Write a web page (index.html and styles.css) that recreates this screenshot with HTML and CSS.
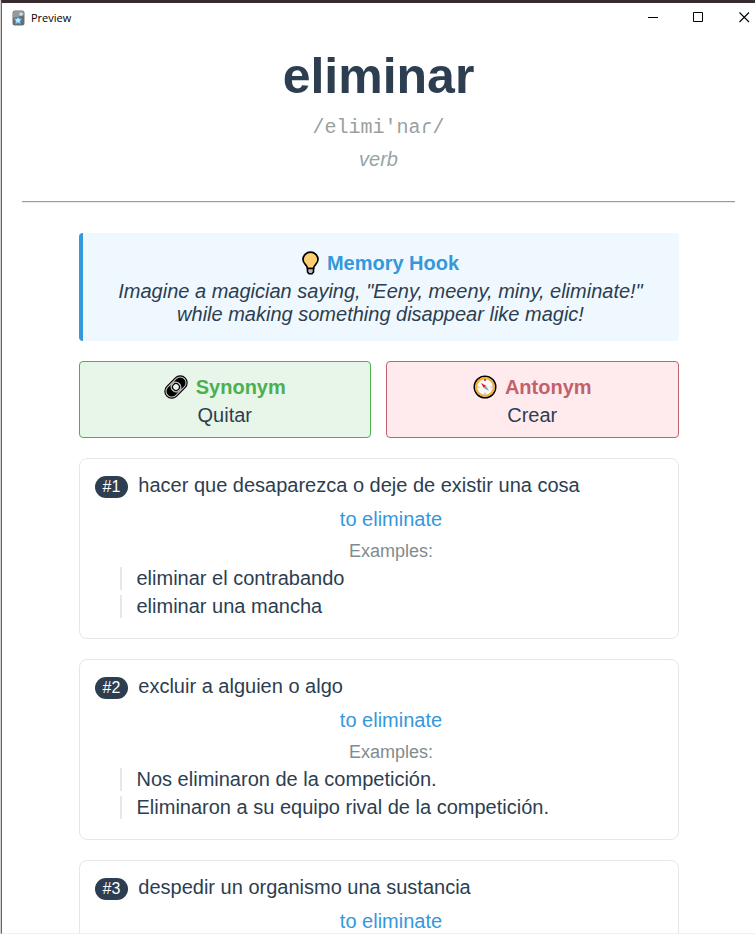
FILE: index.html
```html
<!DOCTYPE html>
<html lang="es">
<head>
<meta charset="utf-8">
<title>Preview</title>
<link rel="stylesheet" href="styles.css">
</head>
<body>
<div class="window">
  <header class="titlebar">
    <svg class="app-icon" width="13" height="16" viewBox="0 0 13 16" aria-hidden="true">
      <rect x="0.5" y="0.5" width="12" height="15" rx="2.5" fill="#6c6c6c"/>
      <path d="M1 8 12 5V3a2 2 0 0 0-2-2H3a2 2 0 0 0-2 2z" fill="#999"/>
      <path d="m6 6.500 1.200 2.300 2.800.300-2 2 .600 2.900L6 12.700 3.400 14 4 11.100 2 9.100l2.800-.300z" fill="#c8eaff" stroke="#45a0e0" stroke-width="1"/>
      <path d="m9 2 .700 1.300 1.500.200-1.100 1 .300 1.500L9 5.300 7.600 6l.300-1.500-1.100-1 1.500-.200z" fill="#d8effc" stroke="#8cc4e8" stroke-width=".5"/>
    </svg>
    <span class="window-title">Preview</span>
    <div class="controls">
      <button class="control" type="button" aria-label="Minimize"><svg width="11" height="11"><path d="M0 5.500h10" stroke="#000"/></svg></button>
      <button class="control" type="button" aria-label="Maximize"><svg width="11" height="11"><path d="M.500.500h9v9h-9z" fill="none" stroke="#000"/></svg></button>
      <button class="control" type="button" aria-label="Close"><svg width="11" height="11"><path d="m.500.500 9.500 9.500M10 .500.500 10" stroke="#000" stroke-width="1.100"/></svg></button>
    </div>
  </header>

  <main class="card">
    <h1 class="word">eliminar</h1>
    <p class="ipa">/elimi'naɾ/</p>
    <p class="pos">verb</p>
    <hr class="rule">

    <div class="content">
      <section class="hook">
        <h2 class="box-title">
          <svg class="emoji" width="17" height="24" viewBox="0 0 17 24" aria-hidden="true">
            <path d="M5.500 17.500C5.500 14 1 13 1 8.500a7.500 7.300 0 0 1 15 0C16 13 11.500 14 11.500 17.500z" fill="#ffcf70" stroke="#000" stroke-width="1.700"/>
            <path d="M5.500 17.500h6v3.500L10 22.800H7l-1.500-1.800z" fill="#bbb" stroke="#000" stroke-width="1.600"/>
          </svg>
          Memory Hook
        </h2>
        <p class="hook-text">Imagine a magician saying, "Eeny, meeny, miny, eliminate!" while making something disappear like magic!</p>
      </section>

      <div class="pair">
        <section class="box synonym">
          <h2 class="box-title">
            <svg class="emoji" width="24" height="24" viewBox="0 0 24 24" aria-hidden="true">
              <g transform="rotate(-45 12 12)" fill="none">
                <rect x="-1.500" y="4.500" width="27" height="15" rx="7.500" fill="#000"/>
                <rect x=".200" y="6.200" width="16.500" height="11.600" rx="5.800" stroke="#c4c4c4" stroke-width="1.100"/>
                <rect x="7.300" y="6.200" width="16.500" height="11.600" rx="5.800" stroke="#c4c4c4" stroke-width="1.100"/>
                <circle cx="12" cy="12" r="4.500" fill="#000" stroke="#c4c4c4" stroke-width="1"/>
                <circle cx="12" cy="12" r="2.800" fill="#e8f5e9"/>
              </g>
            </svg>
            Synonym
          </h2>
          <p class="box-text">Quitar</p>
        </section>
        <section class="box antonym">
          <h2 class="box-title">
            <svg class="emoji" width="24" height="24" viewBox="0 0 24 24" aria-hidden="true">
              <circle cx="12" cy="12" r="10.700" fill="#fff" stroke="#000" stroke-width="1.600"/>
              <circle cx="12" cy="12" r="8.900" fill="#f8f8f8" stroke="#f0b030" stroke-width="2.200"/>
              <path d="M12 4v2" stroke="#e81123" stroke-width="1.600"/>
              <path d="M12 17.500V20M4 12h2.500M17.500 12H20" stroke="#bbb" stroke-width="1.200"/>
              <path d="m8 8 5 2.800-2.200 2.200z" fill="#e81123"/>
              <path d="m16 16-5.200-3 2.200-2.200z" fill="#999"/>
            </svg>
            Antonym
          </h2>
          <p class="box-text">Crear</p>
        </section>
      </div>

      <section class="sense">
        <div class="definition"><span class="badge">#1</span><span>hacer que desaparezca o deje de existir una cosa</span></div>
        <div class="details">
          <p class="translation">to eliminate</p>
          <p class="label">Examples:</p>
          <ul class="examples"><li>eliminar el contrabando</li><li>eliminar una mancha</li></ul>
        </div>
      </section>
      <section class="sense">
        <div class="definition"><span class="badge">#2</span><span>excluir a alguien o algo</span></div>
        <div class="details">
          <p class="translation">to eliminate</p>
          <p class="label">Examples:</p>
          <ul class="examples"><li>Nos eliminaron de la competición.</li><li>Eliminaron a su equipo rival de la competición.</li></ul>
        </div>
      </section>
      <section class="sense">
        <div class="definition"><span class="badge">#3</span><span>despedir un organismo una sustancia</span></div>
        <div class="details">
          <p class="translation">to eliminate</p>
        </div>
      </section>
    </div>
  </main>
</div>
</body>
</html>
```
FILE: styles.css
```css
* { box-sizing: border-box; }
html { background: #cfcfcf; }
body {
  margin: 0;
  height: 100vh;
  padding-left: 1px;
  overflow: hidden;
  font: 20px/23px "Liberation Sans", Arial, sans-serif;
  color: #2c3e50;
}
h1, h2, p, ul { margin: 0; padding: 0; }

.window {
  height: 100%;
  display: flex;
  flex-direction: column;
  background: #fff;
  border-top: 3px solid #382c30;
  border-left: 1px solid #646464;
  border-bottom: 1px solid #f0f0f0;
}
.titlebar {
  display: flex;
  align-items: center;
  flex: none;
  height: 29px;
  padding-left: 10px;
  color: #000;
  font: 11px/16px "Open Sans", "Noto Sans", sans-serif;
}
.window-title { margin-left: 6px; }
.controls { display: flex; margin-left: auto; }
.control {
  display: flex;
  align-items: center;
  justify-content: center;
  width: 45px;
  height: 29px;
  padding: 0;
  border: 0;
  background: none;
}
.control:last-child { width: 34px; padding-left: 12px; }

.card { flex: 1; min-height: 0; overflow: hidden; padding: 15px 20px 0; text-align: center; }
.word { font-size: 50px; line-height: 58px; }
.ipa { margin-top: 11px; font-family: "Liberation Mono", "Courier New", monospace; color: #9a9f9f; }
.pos { margin-top: 9px; font-style: italic; color: #95a5a6; }
.rule { margin: 30px 0; border: 0; border-top: 1px solid #999; border-bottom: 1px solid #ececec; }
.content { max-width: 600px; margin: 0 auto; }

.box-title {
  display: flex;
  align-items: center;
  justify-content: center;
  gap: 8px;
  margin-bottom: 2px;
  font-size: 20px;
  line-height: 30px;
}
.hook {
  padding: 15px;
  border-left: 4px solid #3498db;
  border-radius: 4px;
  background: #f0f8ff;
}
.hook .box-title { color: #3498db; }
.hook-text { font-style: italic; }
.pair { display: grid; grid-template-columns: 1fr 1fr; gap: 15px; margin: 20px 0; }
.box { padding: 10px; border: 1px solid; border-radius: 4px; }
.box-text { color: #2c3e50; }
.synonym { background: #e8f5e9; color: #4caf50; }
.antonym { background: #ffebee; color: #c0626e; }

.sense { margin-bottom: 20px; padding: 15px; border: 1px solid #e5e7eb; border-radius: 8px; }
.definition { display: flex; align-items: baseline; gap: 10px; text-align: left; }
.badge {
  padding: 2px 8px;
  border-radius: 12px;
  background: #2c3e50;
  color: #fff;
  font-size: 16px;
  line-height: 18px;
}
.details { margin-left: 25px; }
.translation { margin-top: 10px; color: #3498db; }
.label { margin: 10px 0 5px; font-size: 18px; line-height: 21px; color: #7f8c8d; }
.examples { list-style: none; text-align: left; }
.examples li { margin-bottom: 5px; padding-left: 15px; border-left: 2px solid #e5e7eb; }
```
